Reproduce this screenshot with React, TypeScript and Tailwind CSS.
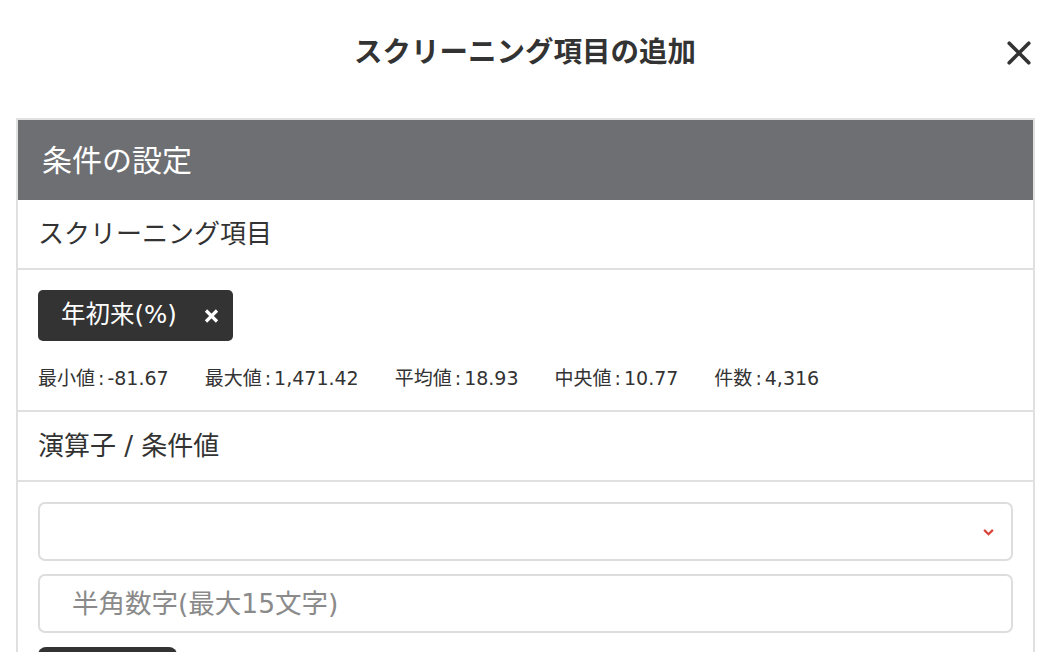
import { useState } from "react";

const stats = [
  { label: "最小値", value: "-81.67" },
  { label: "最大値", value: "1,471.42" },
  { label: "平均値", value: "18.93" },
  { label: "中央値", value: "10.77" },
  { label: "件数", value: "4,316" },
];

export default function App() {
  const [operator, setOperator] = useState("");
  const [value, setValue] = useState("");

  return (
    <div
      className="h-[652px] overflow-hidden bg-white text-[#333]"
      style={{ fontFamily: '"DejaVu Sans", "Noto Sans CJK JP", sans-serif' }}
    >
      {/* Modal header */}
      <div className="relative h-[118px]">
        <h1 className="pt-[34px] text-center text-[28.5px] font-bold leading-[38px] text-[#333]">
          スクリーニング項目の追加
        </h1>
        <button className="absolute right-[18px] top-[40px] h-[26px] w-[26px] text-[#333]">
          <svg viewBox="0 0 24 24" className="h-[26px] w-[26px]" fill="none" stroke="currentColor" strokeWidth="3.4" strokeLinecap="round">
            <path d="M3 3 L21 21 M21 3 L3 21" />
          </svg>
        </button>
      </div>

      {/* Card */}
      <div className="ml-4 mr-[15px] border-2 border-[#e0e0e0]">
        {/* Section title */}
        <div className="flex h-[80px] items-center bg-[#6e6f73] pl-[24px] text-[30px] text-white">
          条件の設定
        </div>

        {/* Screening item */}
        <div className="flex h-[70px] items-center border-b-2 border-[#e0e0e0] pl-[20px] text-[26px]">
          スクリーニング項目
        </div>

        <div className="border-b-2 border-[#e0e0e0] px-[20px] pb-[20px] pt-[20px]">
          <div className="inline-flex h-[51px] items-center gap-[27px] rounded-[5px] bg-[#333] pl-[23px] pr-[14px] text-[24.5px] text-white">
            <span>年初来(%)</span>
            <svg viewBox="0 0 14 14" className="h-[14px] w-[15px]" fill="none" stroke="currentColor" strokeWidth="3.2">
              <path d="M1.5 1.5 L12.5 12.5 M12.5 1.5 L1.5 12.5" />
            </svg>
          </div>
          <div className="mt-[25px] flex gap-[36px] text-[19px] leading-[24px]">
            {stats.map((s) => (
              <span key={s.label}>
                {s.label}
                <span className="mx-[3px]">:</span>
                {s.value}
              </span>
            ))}
          </div>
        </div>

        {/* Operator / value */}
        <div className="flex h-[70px] items-center border-b-2 border-[#e0e0e0] pl-[20px] text-[26px]">
          演算子 / 条件値
        </div>

        <div className="flex flex-col gap-[13px] px-[20px] pt-[20px]">
          <div className="relative">
            <select
              value={operator}
              onChange={(e) => setOperator(e.target.value)}
              className="h-[59px] w-full appearance-none rounded-[7px] border-2 border-[#dddddd] bg-white px-[16px] text-[24px] outline-none"
            >
              <option value=""></option>
              <option value="gte">以上</option>
              <option value="lte">以下</option>
            </select>
            <svg viewBox="0 0 12 8" className="pointer-events-none absolute right-[19px] top-[27px] h-[7px] w-[11px]" fill="none" stroke="#d9453b" strokeWidth="2.6">
              <path d="M1 1 L6 6 L11 1" />
            </svg>
          </div>
          <input
            value={value}
            onChange={(e) => setValue(e.target.value)}
            placeholder="半角数字(最大15文字)"
            className="h-[59px] w-full rounded-[7px] border-2 border-[#dddddd] bg-white px-[32px] text-[26.5px] outline-none placeholder:text-[#8a8a8a]"
          />
          <button aria-label="追加" className="mt-[1px] h-[50px] w-[139px] rounded-[8px] bg-[#333]" />
        </div>
      </div>
    </div>
  );
}
